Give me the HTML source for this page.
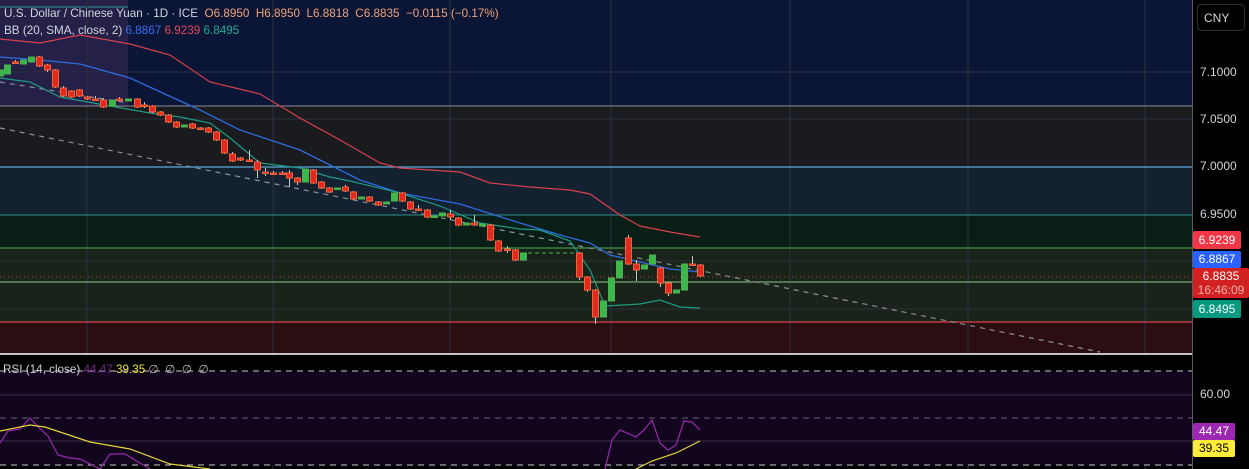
<!DOCTYPE html>
<html><head><meta charset="utf-8"><style>
html,body{margin:0;padding:0;background:#000;}
body{width:1249px;height:469px;overflow:hidden;position:relative;font-family:"Liberation Sans",sans-serif;}
svg{position:absolute;left:0;top:0;}
.lg{position:absolute;left:4px;font-size:11.7px;color:#d1d4dc;white-space:nowrap;}
.tag{position:absolute;left:1193px;width:48px;font-size:12px;text-align:center;border-radius:2px;color:#fff;}
.ax{position:absolute;left:1200px;font-size:12px;color:#d1d4dc;}
</style></head><body>
<svg id="s" width="1249" height="469" xmlns="http://www.w3.org/2000/svg">
<rect x="0" y="0" width="1192" height="106" fill="#0b1535"/>
<rect x="0" y="106" width="1192" height="61" fill="#1a1b1f"/>
<rect x="0" y="167" width="1192" height="48" fill="#142131"/>
<rect x="0" y="215" width="1192" height="33" fill="#0a1e18"/>
<rect x="0" y="248" width="1192" height="34" fill="#18241a"/>
<rect x="0" y="282" width="1192" height="40" fill="#1a2319"/>
<rect x="0" y="322" width="1192" height="32" fill="#2a0e12"/>
<rect x="0" y="0" width="128" height="106" fill="#3a2a55" opacity="0.55"/>
<line x1="0" y1="7" x2="128" y2="7" stroke="#2a9a8a" stroke-width="1"/>
<g stroke="#2c3140" stroke-width="1">
<line x1="87" y1="0" x2="87" y2="469"/><line x1="273" y1="0" x2="273" y2="469"/><line x1="450" y1="0" x2="450" y2="469"/><line x1="611" y1="0" x2="611" y2="469"/><line x1="790" y1="0" x2="790" y2="469"/><line x1="968" y1="0" x2="968" y2="469"/><line x1="1145" y1="0" x2="1145" y2="469"/>
<line x1="0" y1="72" x2="1192" y2="72"/><line x1="0" y1="119" x2="1192" y2="119"/><line x1="0" y1="261" x2="1192" y2="261"/><line x1="0" y1="309" x2="1192" y2="309"/>
</g>
<line x1="0" y1="106" x2="1192" y2="106" stroke="#8a8c92" stroke-width="1"/>
<line x1="0" y1="167" x2="1192" y2="167" stroke="#5aa8dc" stroke-width="1.2"/>
<line x1="0" y1="215" x2="1192" y2="215" stroke="#2f8f8a" stroke-width="1"/>
<line x1="0" y1="248" x2="1192" y2="248" stroke="#4caf50" stroke-width="1"/>
<line x1="0" y1="282" x2="1192" y2="282" stroke="#8bc98a" stroke-width="1"/>
<line x1="0" y1="322" x2="1192" y2="322" stroke="#e0404a" stroke-width="1.2"/>
<line x1="0" y1="277" x2="1192" y2="277" stroke="#d43a2a" stroke-width="1" stroke-dasharray="1,3"/>
<line x1="0" y1="82" x2="128" y2="103" stroke="#8a8f9a" stroke-width="1.2" stroke-dasharray="5,5"/>
<line x1="0" y1="128" x2="1100" y2="352" stroke="#8a8f9a" stroke-width="1.2" stroke-dasharray="5,5"/>
<line x1="528" y1="253" x2="575" y2="253" stroke="#4caf50" stroke-width="1" stroke-dasharray="4,3"/>
<polyline fill="none" stroke="#d8404e" stroke-width="1.2" points="0,39 40,43 80,35 130,44 170,55 210,82 260,94 300,118 340,140 380,163 400,168 460,172 490,183 530,187 570,190 590,194 620,215 640,226 670,232 700,237"/>
<polyline fill="none" stroke="#2f6be0" stroke-width="1.3" points="0,57 40,60 80,64 130,78 200,110 240,130 300,150 360,180 400,193 460,204 520,223 560,235 590,243 610,255 640,262 670,269 700,272"/>
<polyline fill="none" stroke="#1f9a82" stroke-width="1.2" points="0,78 30,82 60,97 110,106 150,113 180,117 210,123 230,138 260,163 300,168 330,177 350,181 400,193 440,206 480,223 500,226 520,229 540,230 570,241 590,270 605,306 640,304 660,300 680,307 700,308"/>
<g id="c"></g>
<line x1="0" y1="354" x2="1192" y2="354" stroke="#ffffff" stroke-width="1.5"/>
<rect x="0" y="355" width="1192" height="16" fill="#000"/>
<rect x="0" y="371" width="1192" height="94" fill="#12061f"/>
<g stroke="#3a3048" stroke-width="1"><line x1="0" y1="395" x2="1192" y2="395"/><line x1="0" y1="441" x2="1192" y2="441"/></g>
<g stroke="#c8c8d0" stroke-width="1" stroke-dasharray="6,5"><line x1="0" y1="371" x2="1192" y2="371"/><line x1="0" y1="465" x2="1192" y2="465"/></g>
<line x1="0" y1="418" x2="1192" y2="418" stroke="#6a6078" stroke-width="1" stroke-dasharray="6,5"/>
<polyline fill="none" stroke="#9c27b0" stroke-width="1.2" points="0,443 8,431 20,429 30,418 40,429 48,436 58,455 70,458 80,459 100,469 110,454 125,454 135,460 150,469"/>
<polyline fill="none" stroke="#9c27b0" stroke-width="1.2" points="605,469 612,440 620,430 636,437 644,430 652,420 660,443 668,450 676,445 684,421 692,422 700,430"/>
<polyline fill="none" stroke="#e6d43a" stroke-width="1.2" points="0,431 30,425 45,427 90,442 130,449 170,464 210,469"/>
<polyline fill="none" stroke="#e6d43a" stroke-width="1.2" points="636,469 652,461 676,453 700,441"/>
<line x1="1192.5" y1="0" x2="1192.5" y2="469" stroke="#5a5d66" stroke-width="1"/>
<rect x="1197.5" y="4.5" width="47" height="26" rx="4" fill="#000" stroke="#2f3136"/>
</svg>
<div class="lg" style="top:7px">U.S. Dollar / Chinese Yuan · 1D · ICE &nbsp;<span style="color:#f0a27a">O6.8950 &nbsp;H6.8950 &nbsp;L6.8818 &nbsp;C6.8835 &nbsp;−0.0115 (−0.17%)</span></div>
<div class="lg" style="top:24px">BB (20, SMA, close, 2) <span style="color:#3a6ff0">6.8867</span> <span style="color:#e04a5a">6.9239</span> <span style="color:#22ab94">6.8495</span></div>
<div class="lg" style="top:362px;left:3px">RSI (14, close) <span style="color:#7a2a90">44.47</span> <span style="color:#f0e040">39.35</span> <span style="color:#bbb">∅ &nbsp;∅ &nbsp;∅ &nbsp;∅</span></div>
<div class="ax" style="left:1204px;top:11px;font-size:12px">CNY</div>
<div class="ax" style="top:65px">7.1000</div>
<div class="ax" style="top:112px">7.0500</div>
<div class="ax" style="top:159px">7.0000</div>
<div class="ax" style="top:207px">6.9500</div>
<div class="ax" style="top:387px">60.00</div>
<div class="tag" style="top:231px;height:18px;line-height:18px;background:#f23645">6.9239</div>
<div class="tag" style="top:251px;height:17px;line-height:17px;background:#2962ff">6.8867</div>
<div class="tag" style="top:268px;height:30px;line-height:14px;padding-top:1px;box-sizing:border-box;background:#d32020;width:56px">6.8835<br><span style="color:#f2b0b0">16:46:09</span></div>
<div class="tag" style="top:300px;height:18px;line-height:18px;background:#089981">6.8495</div>
<div class="tag" style="top:423px;height:17px;line-height:17px;background:#9c27b0;width:42px">44.47</div>
<div class="tag" style="top:440px;height:17px;line-height:17px;background:#ffeb3b;color:#000;width:42px">39.35</div>
<script>
var d=[[0,76,70,78,68],[7,74,65,76,63],[15,62,62,60,64],[23,64,60,65,58],[31,62,57,63,55],[39,57,66,56,67],[47,65,70,64,72],[55,70,87,69,88],[63,88,96,86,97],[71,91,97,90,98],[79,90,96,89,97],[87,97,99,96,100],[95,99,99,96,100],[103,100,107,98,108],[112,106,100,107,99],[119,99,99,97,101],[128,101,99,102,98],[137,99,107,98,108],[144,105,105,102,108],[152,106,112,105,113],[160,112,115,111,116],[168,115,122,114,123],[176,122,127,121,128],[184,127,125,128,122],[192,124,128,123,129],[200,128,128,127,129],[208,128,132,127,133],[216,132,140,131,141],[224,140,153,139,154],[232,154,161,152,162],[240,158,160,157,161],[249,160,160,150,161],[257,162,170,160,178],[265,172,172,168,176],[273,173,173,171,174],[282,173,173,171,174],[289,173,178,170,187],[297,178,182,177,185],[305,182,169,183,161],[313,170,183,169,184],[321,182,188,181,189],[329,188,192,187,193],[337,189,188,190,187],[345,187,191,185,192],[353,192,199,191,200],[361,199,197,200,195],[369,197,201,196,202],[378,202,205,201,206],[386,204,202,205,198],[394,201,193,202,189],[402,193,201,192,202],[410,202,209,201,210],[418,209,209,205,210],[427,210,217,209,218],[434,217,216,218,214],[442,216,213,217,210],[450,214,217,210,220],[458,218,225,217,226],[466,225,223,227,220],[474,223,225,215,226],[482,226,224,227,222],[490,225,240,224,241],[498,241,251,240,252],[507,249,249,246,253],[515,250,260,249,261],[523,260,253,261,248],[579,253,277,252,280],[587,277,290,276,292],[595,290,317,289,324],[603,317,301,318,298],[611,301,278,302,273],[619,278,261,282,258],[628,238,264,235,265],[636,264,270,260,281],[644,269,265,270,250],[652,264,255,265,235],[660,268,283,267,287],[668,283,293,282,296],[676,293,290,294,278],[684,290,264,291,258],[692,264,264,256,265],[700,265,276,264,277]];
var g=document.getElementById('c'),h='';
d.forEach(function(c){var x=c[0]+0.5,o=c[1],cl=c[2],hi=Math.min(c[3],o,cl),lo=Math.max(c[4],o,cl);var up=cl<o;var col=up?'#4caf50':'#f0643a';var fill=up?'#3cb84a':'#e02a20';
h+='<line x1="'+x+'" y1="'+hi+'" x2="'+x+'" y2="'+lo+'" stroke="#c8c8c8" stroke-width="1"/>';
var t=Math.min(o,cl),bh=Math.max(Math.abs(o-cl),1.5);
h+='<rect x="'+(x-3)+'" y="'+t+'" width="6" height="'+bh+'" fill="'+fill+'" stroke="'+col+'" stroke-width="1"/>';});
g.innerHTML=h;
</script>
</body></html>
